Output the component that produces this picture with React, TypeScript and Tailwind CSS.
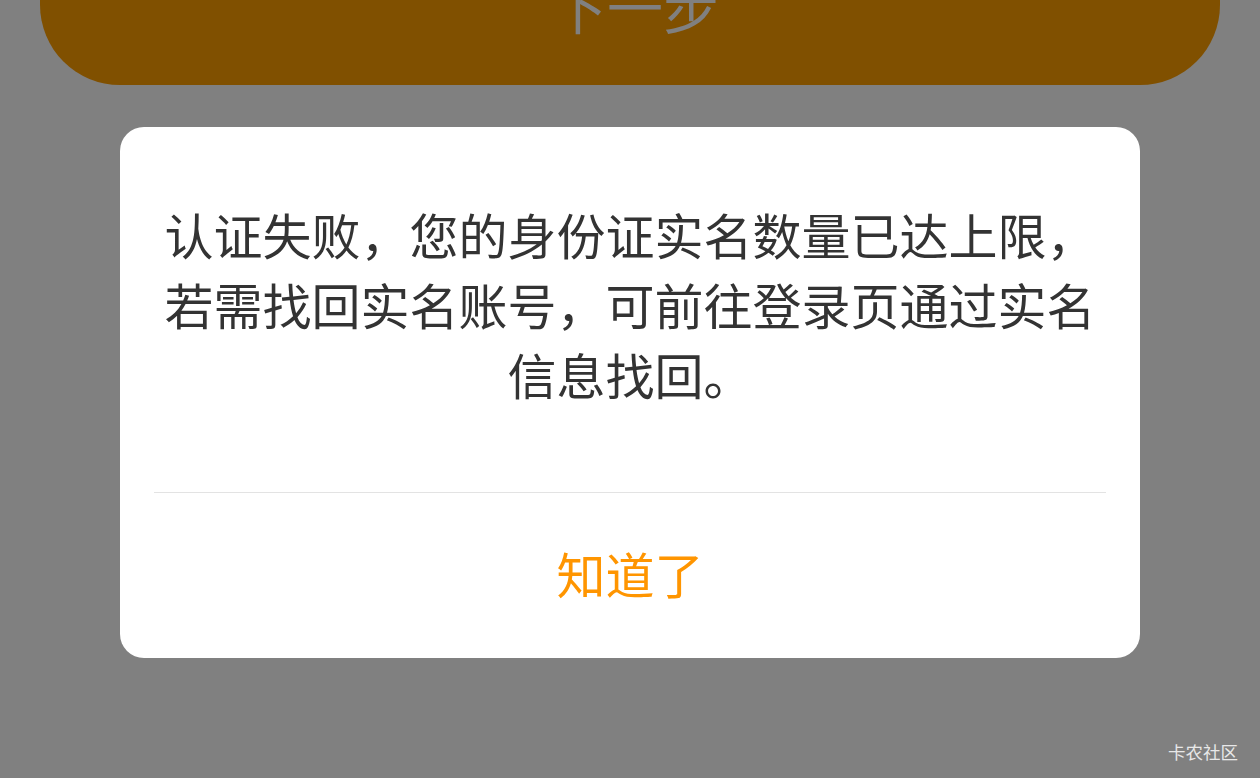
import React from "react";

export default function App() {
  return (
    <div
      className="relative w-full h-[778px] overflow-hidden bg-[#808080] flex flex-col items-center"
      style={{ fontFamily: '"Noto Sans CJK SC", "Noto Sans", sans-serif' }}
    >
      <div className="w-[1180px] h-[170px] mt-[-85px] shrink-0 rounded-[80px] bg-[#805000] flex items-center justify-center text-[56px] leading-none text-[#808080] pl-[10px] pt-[10px]">
        下一步
      </div>

      <div className="mt-[42px] w-[1020px] shrink-0 rounded-[24px] bg-white flex flex-col">
        <div className="px-[44px] pt-[72px] pb-[83px] text-center text-[49px] leading-[70px] text-[#333333]">
          认证失败，您的身份证实名数量已达上限，若需找回实名账号，可前往登录页通过实名信息找回。
        </div>
        <div className="mx-[34px] h-px bg-[#e3e3e3]" />
        <div className="h-[165px] pb-[6px] flex items-center justify-center text-[49px] leading-none text-[#ff9500]">
          知道了
        </div>
      </div>

      <div className="absolute right-[22px] bottom-[18px] text-[17.5px] leading-none text-[#e8e8e8]">
        卡农社区
      </div>
    </div>
  );
}
